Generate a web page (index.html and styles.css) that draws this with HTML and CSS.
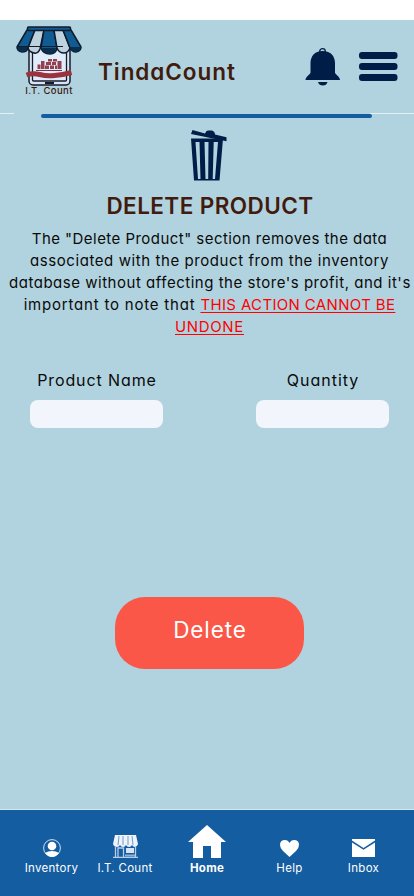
FILE: index.html
```html
<!DOCTYPE html>
<html lang="en">
<head>
<meta charset="utf-8">
<title>TindaCount</title>
<link rel="stylesheet" href="styles.css">
</head>
<body>
<div class="app">
  <header class="header">
    <div class="brand">
      <svg class="logo" width="68" height="62" viewBox="0 0 68 62">
        <rect x="14" y="14" width="41" height="45" rx="4" fill="#d9e4f3" stroke="#171c2c" stroke-width="1.500"/>
        <rect x="17.500" y="14" width="34" height="41" rx="1" fill="#dfecfb" stroke="#171c2c" stroke-width="1.300"/>
        <path d="M30 57h9" stroke="#171c2c" stroke-width="2"/>
        <g transform="translate(0 -4)">
          <path d="M22.500 47v-4.500h3V47zM26 47v-8h3.500v8zM30 47v-3.500h4V47zM31 43v-3h5v3zM35 47v-3.500h4V47zM37 43v-3h4v3zM33 39.500v-2.500h4v2.500zM38 39.500v-2.500h4v2.500zM40 47v-3.500h2V47zM42.500 47v-8h4v8z" fill="#96404e"/>
          <path d="M21 48.500h26" stroke="#7a3040"/>
          <path d="M11.500 53q6-2 13-.5 8 2 15 1 8-.5 17-3" fill="none" stroke="#99333d" stroke-width="5"/>
        </g>
        <g stroke="#101b2c" stroke-width="1.500" stroke-linejoin="round">
          <path d="M12 4h8l-7 18q-1 4-6 4-5-1-5-5z" fill="#105b92"/>
          <path d="M20 4h9l-4 19q-2 5-6 4-5-1-6-5z" fill="#bdd1df"/>
          <path d="M29 4h10l3 18q-1 6-7 6-7 0-9-6z" fill="#105b92"/>
          <path d="M39 4h9l7 18q-2 5-6 5-5 0-7-5z" fill="#bdd1df"/>
          <path d="M48 4h8l10 17q0 4-5 5-4 0-6-4z" fill="#105b92"/>
          <path d="M3 21h9.500q-1 5-6 5-4-1-3.500-5M27 22h14q-1 6-6 6-6 0-8-6M55 21h10q1 4-4 5-5 0-6-5" fill="#092e50" stroke="none"/>
          <rect x="12.500" y="1" width="43" height="3.500" rx="1" fill="#105b92"/>
          <path d="M2 20.500h46" stroke-width="1"/>
        </g>
      </svg>
      <span class="logo-name">I.T. Count</span>
    </div>
    <h1 class="title">TindaCount</h1>
    <div class="actions">
      <svg width="36" height="38" viewBox="0 0 36 38" fill="#001d47">
        <circle cx="17.500" cy="3.500" r="2.800" fill="none" stroke="#001d47" stroke-width="1.300"/>
        <path d="M17.500 3C9.500 3 5.500 8.500 5.500 15v9.500c0 2-5 4-5 7.500h34.500c0-3.500-5-5.500-5-7.500V15c0-6.500-4-12-12.500-12z"/>
        <path d="M13 34h9.500q-1 3.500-4.700 3.500T13 34z"/>
      </svg>
      <svg width="39" height="29" viewBox="0 0 39 29" fill="#001d47">
        <rect width="38.500" height="7" rx="3"/><rect y="11" width="38.500" height="7" rx="3"/><rect y="22" width="38.500" height="7" rx="3"/>
      </svg>
    </div>
  </header>
  <div class="progress"><div class="bar"></div></div>
  <main class="main">
    <svg class="trash" width="36" height="52" viewBox="0 0 36 52">
      <path d="M1.500 0l12.500 3.500q1-3 3-3h4q3 1 3 4l11.500 2.800v4L0 4z" fill="#001d47"/>
      <path fill-rule="evenodd" fill="#001d47" d="M0 8.500h32L28.500 50.500H3zM4.500 12l2.500 37h2.500L8.500 12zM13.500 12l1 37h2.700l.3-37zM22.700 12l-1 37h2.300l3-37z"/>
    </svg>
    <h2 class="heading">DELETE PRODUCT</h2>
    <p class="copy">
      <span class="line l1">The "Delete Product" section removes the data</span>
      <span class="line l2">associated with the product from the inventory</span>
      <span class="line l3">database without affecting the store's profit, and it's</span>
      <span class="line l4">important to note that <u>THIS ACTION CANNOT BE</u></span>
      <span class="line l5"><u>UNDONE</u></span>
    </p>
    <form class="form">
      <label class="field"><span class="label-name">Product Name</span><input class="input" type="text"></label>
      <label class="field"><span class="label-qty">Quantity</span><input class="input" type="text"></label>
    </form>
    <button class="delete" type="button">Delete</button>
  </main>
  <nav class="nav">
    <a class="item inventory">
      <svg width="18" height="18" viewBox="0 0 18 18"><circle cx="9" cy="9" r="8.400" fill="none" stroke="#fff" stroke-width=".8"/><circle cx="9" cy="7" r="4.300" fill="#fff"/><path d="M2 14q3-2 7-2t7 2q-3 4-7 4t-7-4z" fill="#fff"/></svg>
      <span>Inventory</span>
    </a>
    <a class="item count">
      <svg width="25" height="23" viewBox="0 0 25 23"><path d="M2 0h21l2 9q-1 3-3 3-2 0-3-2-1 2-3 2-2 0-3-2-1 2-3 2-2 0-3-2-1 2-3 2Q1 12 0 9z" fill="#eff3fc"/><path d="M6 1L5 10M10 1v9M15 1v9M19 1l1 9" stroke="#6f9bc7"/><path d="M2.500 12v10M22.500 12v10M0 22.500h25M5 22v-9h5.500v9" fill="none" stroke="#b7cce5" stroke-width="1.300"/><path d="M13 13h8v5h-8z" fill="#d7e5f3"/><path d="M12 19.500h10v2H12z" fill="#8fb3d8"/></svg>
      <span>I.T. Count</span>
    </a>
    <a class="item home">
      <svg width="38" height="33" viewBox="0 0 38 33"><path d="M19 0l19 17h-5v16H23V21h-8v12H5V17H0z" fill="#fff"/></svg>
      <span>Home</span>
    </a>
    <a class="item help">
      <svg width="19" height="17" viewBox="0 0 19 17"><path d="M9.500 17L3 11Q0 8 0 5 0 0 5 0q3 0 4.500 3Q11 0 14 0q5 0 5 5 0 3-3 6z" fill="#fff"/></svg>
      <span>Help</span>
    </a>
    <a class="item inbox">
      <svg width="23" height="18" viewBox="0 0 23 18"><path d="M0 0h23v1.500L11.500 9 0 1.500zM0 3.500l11.500 7.300L23 3.500V18H0z" fill="#fff"/></svg>
      <span>Inbox</span>
    </a>
  </nav>
</div>
</body>
</html>
```
FILE: styles.css
```css
* { box-sizing: border-box; }
body {
  margin: 0;
  background: #fff;
  color: #0a0a0a;
  font-family: Inter, "Open Sans", sans-serif;
  font-feature-settings: "cv11";
}
.app { height: 896px; padding-top: 20px; display: flex; flex-direction: column; }
.header { height: 93px; background: #b1d3df; display: flex; flex: none; }
.brand { width: 98px; padding: 6px 0 0 15px; display: flex; flex-direction: column; }
.logo { display: block; flex: none; }
.logo-name { width: 68px; text-align: center; font-size: 9.500px; line-height: 12px; margin-top: -3px; font-weight: 500; letter-spacing: .4px; color: #3b1a10; white-space: nowrap; }
.title { margin: 37px 0 0; width: 207px; font-size: 22.500px; line-height: 30px; font-weight: 600; letter-spacing: .95px; color: #411b0d; white-space: nowrap; }
.actions { display: flex; gap: 18px; padding-top: 28px; }
.actions svg:last-child { margin-top: 4px; }
.progress {
  height: 5px;
  flex: none;
  background: linear-gradient(90deg, #e3f0f5 14px, transparent 14px 370px, #e3f0f5 370px) top / 100% 1px no-repeat #b1d3df;
  padding: 1px 42px 0 41px;
}
.bar { height: 4px; border-radius: 2px; background: #155da1; }
.main { flex: 1; background: #b1d3df; display: flex; flex-direction: column; align-items: center; }
.trash { margin: 12px 0 0 4px; flex: none; }
.heading { margin: 9px 0 0 6px; font-size: 22.500px; line-height: 30px; font-weight: 600; letter-spacing: .43px; color: #411b0d; white-space: nowrap; }
.copy { margin: 7px 0 0; width: 414px; font-size: 15px; line-height: 22px; }
.line { display: block; width: max-content; margin: 0 auto; white-space: nowrap; }
.l1 { letter-spacing: .46px; padding-left: 5px; }
.l2 { letter-spacing: .58px; padding-left: 5px; }
.l3 { letter-spacing: .52px; margin-left: 9px; }
.l4 { letter-spacing: .8px; padding-left: 5px; }
.l4 u { letter-spacing: .35px; }
.l5 { letter-spacing: .65px; padding-left: 5px; }
.copy u { color: #f00; text-underline-offset: 2px; text-decoration-thickness: 1px; }
.form { margin: 30px 0 0; width: 414px; padding: 0 25px 0 30px; display: flex; justify-content: space-between; }
.field { width: 133px; display: flex; flex-direction: column; align-items: center; font-size: 16px; line-height: 24px; white-space: nowrap; }
.label-name { letter-spacing: .9px; padding-left: 1px; }
.label-qty { letter-spacing: 1px; padding-left: 1px; }
.input { width: 133px; height: 28px; margin: 8px 0 0; border: 0; border-radius: 8px; background: #f3f5fc; }
.delete { width: 189px; height: 72px; margin: 169px 0 0 5px; padding: 0 0 7px 1px; border: 0; border-radius: 30px; background: #fa5748; color: #fff; font: 400 22.500px Inter, sans-serif; letter-spacing: .9px; }
.nav { height: 87px; flex: none; background: #155da1; border-top: 1px solid #d5e6ef; color: #fff; display: flex; padding-left: 14px; }
.item { display: flex; flex-direction: column; align-items: center; justify-content: flex-end; padding-bottom: 20px; font-size: 11.500px; line-height: 16px; letter-spacing: .3px; white-space: nowrap; }
.item svg { display: block; margin-bottom: 3px; }
.inventory { width: 75px; }
.count { width: 72px; }
.home { width: 92px; font-weight: 700; }
.help { width: 73px; }
.inbox { width: 75px; }
.count svg { margin-bottom: 2px; }
.home svg { margin-bottom: 2px; }
```
